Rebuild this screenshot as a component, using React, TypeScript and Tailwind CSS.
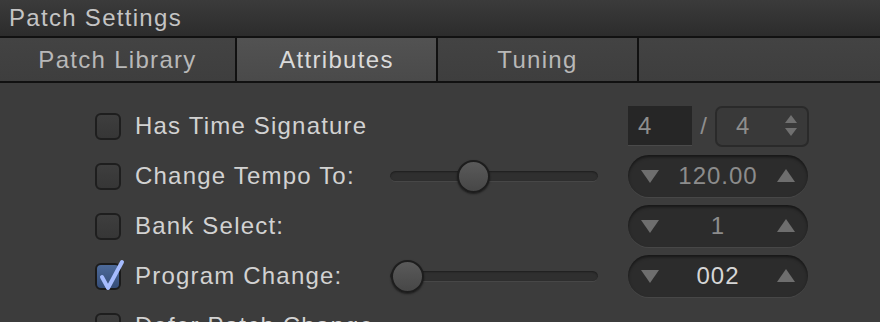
import { useState } from "react";

const font = { fontFamily: '"Liberation Sans", Arial, sans-serif' };

function Checkbox({ checked }: { checked?: boolean }) {
  return (
    <div className="relative w-[26px] h-[27px] shrink-0">
      <div
        className={
          checked
            ? "w-full h-full rounded-[6px] border-2 border-[#1b1b1b] bg-gradient-to-b from-[#4d6a9a] to-[#354d78]"
            : "w-full h-full rounded-[6px] border-2 border-[#1e1e1e] bg-gradient-to-b from-[#3e3e3e] to-[#363636]"
        }
      />
      {checked && (
        <svg
          className="absolute left-0 -top-[4px]"
          width="32"
          height="34"
          viewBox="0 0 32 34"
        >
          <path
            d="M7 18 L13 29 L27 3"
            fill="none"
            stroke="#a6bcff"
            strokeWidth="4"
            strokeLinecap="round"
            strokeLinejoin="round"
          />
        </svg>
      )}
    </div>
  );
}

function Slider({ pos }: { pos: number }) {
  return (
    <div className="relative w-[208px] h-[32px] flex items-center">
      <div className="w-full h-[11px] rounded-full bg-[#2f2f2f] border-b border-[#474747] shadow-[inset_0_1px_2px_rgba(0,0,0,0.4)]" />
      <div
        className="absolute top-0 w-[33px] h-[33px] rounded-full border-2 border-[#1d1d1d] bg-gradient-to-b from-[#5a5a5a] to-[#474747] shadow-[0_1px_2px_rgba(0,0,0,0.5)]"
        style={{ left: pos }}
      />
    </div>
  );
}

function Stepper({ value, bright }: { value: string; bright?: boolean }) {
  return (
    <div className="w-[180px] h-[42px] rounded-full bg-[#2c2c2c] shadow-[inset_0_2px_3px_rgba(0,0,0,0.5),0_1px_0_rgba(255,255,255,0.06)] flex items-center justify-between px-[12px]">
      <svg width="20" height="16" viewBox="0 0 20 16">
        <polygon points="1,2 19,2 10,15" fill="#6e6e6e" />
      </svg>
      <span
        className={
          bright
            ? "text-[24px] tracking-[1px] text-[#d6d6d6] leading-none"
            : "text-[24px] tracking-[1px] text-[#8c8c8c] leading-none"
        }
      >
        {value}
      </span>
      <svg width="20" height="16" viewBox="0 0 20 16">
        <polygon points="1,14 19,14 10,1" fill="#6e6e6e" />
      </svg>
    </div>
  );
}

function Row({
  label,
  checked,
  slider,
  control,
}: {
  label: string;
  checked?: boolean;
  slider?: number;
  control?: React.ReactNode;
}) {
  return (
    <div className="flex items-center h-[50px]">
      <div className="w-[390px] pl-[95px] flex items-center gap-[14px]">
        <Checkbox checked={checked} />
        <span className="text-[24px] tracking-[1.2px] text-[#d2d2d2] whitespace-nowrap">
          {label}
        </span>
      </div>
      <div className="w-[208px]">
        {slider !== undefined && <Slider pos={slider} />}
      </div>
      <div className="ml-[30px]">{control}</div>
    </div>
  );
}

export default function App() {
  const [tab] = useState("Attributes");
  const tabs = ["Patch Library", "Attributes", "Tuning"];
  return (
    <div className="w-[880px] h-[322px] overflow-hidden bg-[#3c3c3c]" style={font}>
      <div className="h-[36px] bg-gradient-to-b from-[#3b3b3b] to-[#2c2c2c] flex items-center pl-[9px]">
        <span className="text-[24px] text-[#c4c4c4] tracking-[1.3px]">Patch Settings</span>
      </div>
      <div className="h-[47px] bg-[#111] py-[2px] flex">
        {tabs.map((t, i) => (
          <div
            key={t}
            className={
              (i === 0 ? "w-[235px] " : "w-[199px] ml-[2px] ") +
              (t === tab
                ? "bg-gradient-to-b from-[#525252] to-[#4a4a4a] text-[#dadada]"
                : "bg-gradient-to-b from-[#434343] to-[#3e3e3e] text-[#b8b8b8]") +
              " flex items-center justify-center text-[24px] tracking-[1.3px]"
            }
          >
            {t}
          </div>
        ))}
        <div className="flex-1 ml-[2px] bg-gradient-to-b from-[#434343] to-[#3e3e3e]" />
      </div>
      <div className="pt-[18px]">
        <Row
          label="Has Time Signature"
          control={
            <div className="flex items-center">
              <div className="w-[64px] h-[40px] bg-[#262626] border-b border-[#4a4a4a] flex items-center pl-[10px] text-[24px] text-[#8e8e8e]">
                4
              </div>
              <span className="w-[23px] text-center text-[24px] text-[#8e8e8e]">/</span>
              <div className="w-[94px] h-[41px] rounded-[7px] border-2 border-[#2a2a2a] bg-[#393939] flex items-center justify-between pl-[19px] pr-[9px]">
                <span className="text-[24px] text-[#8e8e8e]">4</span>
                <svg width="14" height="26" viewBox="0 0 14 26">
                  <polygon points="1,10 13,10 7,2" fill="#707070" />
                  <polygon points="1,15 13,15 7,23" fill="#707070" />
                </svg>
              </div>
            </div>
          }
        />
        <Row label="Change Tempo To:" slider={67} control={<Stepper value="120.00" />} />
        <Row label="Bank Select:" control={<Stepper value="1" />} />
        <Row
          label="Program Change:"
          checked
          slider={1}
          control={<Stepper value="002" bright />}
        />
        <Row label="Defer Patch Change" />
      </div>
    </div>
  );
}
